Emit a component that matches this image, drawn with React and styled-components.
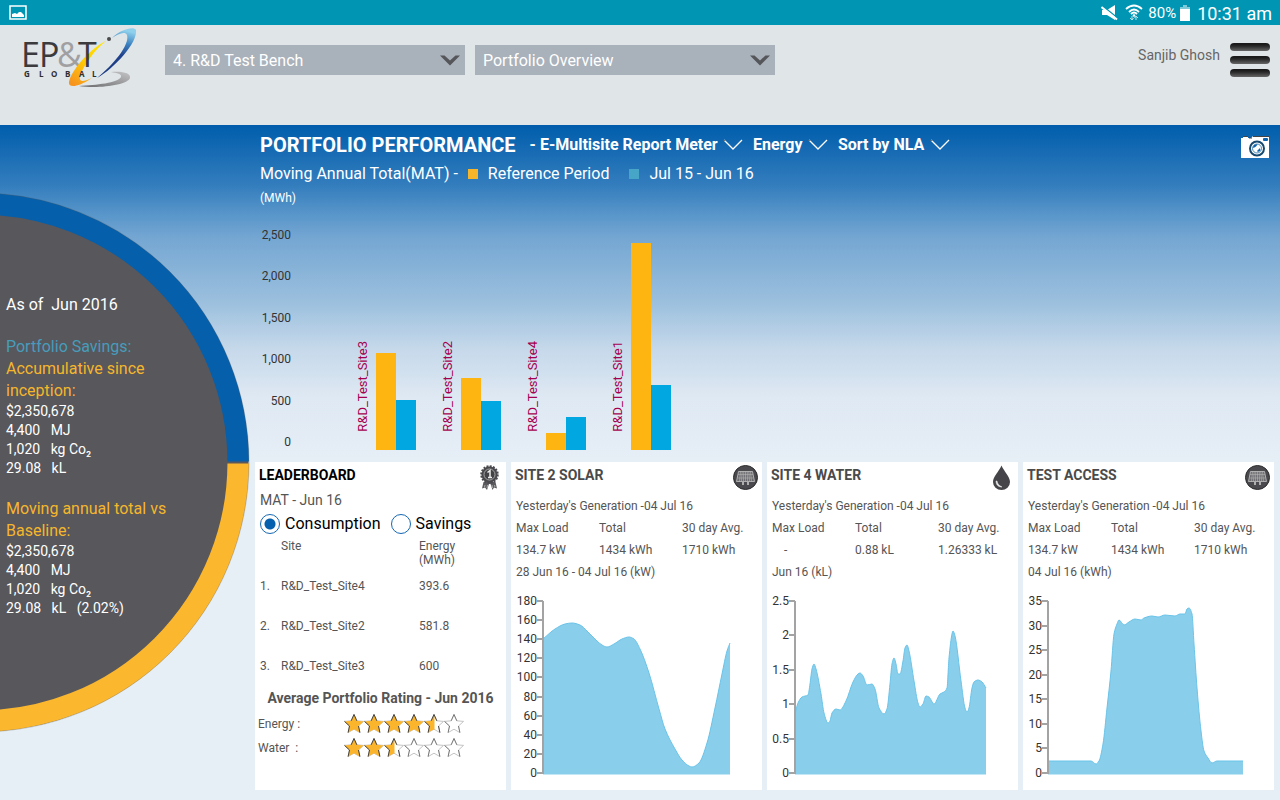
import React, { useState } from 'react';
import styled, { createGlobalStyle } from 'styled-components';

const sites = [
  { name: 'R&D_Test_Site3', reference: 97, current: 50 },
  { name: 'R&D_Test_Site2', reference: 72, current: 49 },
  { name: 'R&D_Test_Site4', reference: 17, current: 33 },
  { name: 'R&D_Test_Site1', reference: 207, current: 65 },
];

const leaders = [
  { site: 'R&D_Test_Site4', energy: '393.6' },
  { site: 'R&D_Test_Site2', energy: '581.8' },
  { site: 'R&D_Test_Site3', energy: '600' },
];

// [distance from the axis, height above zero]
const solarPoints = [
  [0, 134], [12, 144], [22, 149], [29, 150], [37, 148], [44, 142], [54, 132], [59, 128],
  [64, 126], [71, 129], [79, 134], [86, 136], [91, 134], [97, 124], [106, 100], [116, 64],
  [122, 44], [132, 24], [139, 13], [146, 7], [149, 6], [156, 10], [164, 30], [172, 65],
  [179, 99], [184, 122], [187, 130],
];

const waterPoints = [
  [0, 59], [3, 70], [7, 76], [13, 78], [15, 89], [17, 104], [19, 109], [21, 104], [26, 79],
  [29, 60], [33, 50], [35, 52], [37, 60], [41, 64], [45, 63], [51, 72], [58, 91], [63, 99],
  [65, 100], [68, 97], [72, 88], [77, 89], [80, 84], [84, 65], [89, 59], [92, 64], [95, 89],
  [97, 109], [99, 115], [101, 109], [103, 99], [105, 99], [108, 112], [110, 125], [112, 128],
  [114, 122], [119, 92], [123, 70], [125, 66], [128, 69], [131, 77], [134, 76], [139, 69],
  [145, 79], [149, 81], [152, 85], [154, 115], [157, 139], [158, 142], [160, 137], [166, 92],
  [170, 65], [172, 61], [174, 65], [177, 85], [179, 91], [183, 93], [187, 91], [191, 85],
];

const accessPoints = [
  [0, 12], [43, 12], [48, 9], [51, 12], [55, 29], [59, 65], [63, 102], [66, 139], [69, 149],
  [71, 153], [76, 148], [81, 151], [87, 154], [93, 153], [96, 155], [104, 157], [110, 156],
  [117, 158], [127, 157], [132, 159], [137, 159], [139, 164], [141, 165], [144, 159],
  [146, 129], [149, 85], [153, 42], [156, 22], [160, 15], [164, 10], [169, 12], [195, 12],
];

const widgets = [
  {
    title: 'SITE 2 SOLAR',
    icon: 'solar',
    stats: ['134.7 kW', '1434 kWh', '1710 kWh'],
    range: '28 Jun 16 - 04 Jul 16 (kW)',
    ticks: ['0', '20', '40', '60', '80', '100', '120', '140', '160', '180'],
    axis: 32,
    points: solarPoints,
  },
  {
    title: 'SITE 4 WATER',
    icon: 'water',
    stats: ['    -', '0.88 kL', '1.26333 kL'],
    range: 'Jun 16 (kL)',
    ticks: ['0', '0.5', '1', '1.5', '2', '2.5'],
    axis: 28,
    points: waterPoints,
  },
  {
    title: 'TEST ACCESS',
    icon: 'solar',
    stats: ['134.7 kW', '1434 kWh', '1710 kWh'],
    range: '04 Jul 16 (kWh)',
    ticks: ['0', '5', '10', '15', '20', '25', '30', '35'],
    axis: 25,
    points: accessPoints,
  },
];

// monotone curve through the points, so flat parts stay flat
function curve(points) {
  const slope = (a, b) => (b[1] - a[1]) / (b[0] - a[0]);
  const tangents = points.map((p, i) => {
    if (i === 0) return slope(p, points[1]);
    if (i === points.length - 1) return slope(points[i - 1], p);
    const before = slope(points[i - 1], p);
    const after = slope(p, points[i + 1]);
    return before * after <= 0 ? 0 : (2 * before * after) / (before + after);
  });
  return points
    .map((p, i) => {
      if (i === 0) return `M${p[0]} ${p[1]}`;
      const prev = points[i - 1];
      const third = (p[0] - prev[0]) / 3;
      return `C${prev[0] + third} ${prev[1] + tangents[i - 1] * third} ${p[0] - third} ${p[1] - tangents[i] * third} ${p[0]} ${p[1]}`;
    })
    .join('');
}

function AreaChart({ label, ticks, axis, points }) {
  const bottom = 178;
  const height = 172;
  const line = curve(points.map(([x, y]) => [axis + x, bottom - y]));
  const last = axis + points[points.length - 1][0];
  return (
    <ChartSvg viewBox="0 0 251 190" role="img" aria-label={label}>
      <path d={`${line}V${bottom + 1}H${axis}Z`} fill="#89cfec" />
      <path d={line} fill="none" stroke="#6bc3e8" />
      <path d={`M${axis} ${bottom + 1}H${last}`} stroke="#89cfec" />
      <path d={`M${axis} 6V${bottom + 1}`} stroke="#a3a3a3" strokeWidth="2" />
      {ticks.map((tick, i) => {
        const y = Math.round(bottom - (i * height) / (ticks.length - 1));
        return (
          <g key={tick}>
            <path d={`M${axis - 6} ${y}h6`} stroke="#a3a3a3" strokeWidth="2" />
            <text x={axis - 6} y={y + 4} textAnchor="end">{tick}</text>
          </g>
        );
      })}
    </ChartSvg>
  );
}

function Logo() {
  return (
    <LogoSvg viewBox="22 25 116 65" role="img" aria-label="EP&T Global">
      <defs>
        <linearGradient id="gold" x1="0.8" y1="0" x2="0.2" y2="1">
          <stop offset="0" stopColor="#ffe400" />
          <stop offset="0.5" stopColor="#ffcb05" />
          <stop offset="1" stopColor="#f7941e" />
        </linearGradient>
        <linearGradient id="blue" x1="0.5" y1="0" x2="0.3" y2="1">
          <stop offset="0" stopColor="#8fd0ec" />
          <stop offset="0.25" stopColor="#3c82c0" />
          <stop offset="0.5" stopColor="#20428c" />
          <stop offset="1" stopColor="#1b3a80" />
        </linearGradient>
        <linearGradient id="silver" x1="1" y1="0" x2="0" y2="1">
          <stop offset="0" stopColor="#c4c4c6" />
          <stop offset="1" stopColor="#6a6a6c" />
        </linearGradient>
      </defs>
      <LogoLetters>
        <tspan x="21" fill="#3b3a3c">E</tspan>
        <tspan x="39" fill="#3b3a3c">P</tspan>
        <tspan x="57" fill="#a0a0a2">&amp;</tspan>
      </LogoLetters>
      <path d="M106 41C92 47 71 70 69 82C68 88 77 88 92 78C83 82 79 82 80 77C82 68 94 50 106 41Z" fill="url(#gold)" />
      <LogoLetters>
        <tspan x="78" fill="#3b3a3c">T</tspan>
      </LogoLetters>
      <path d="M112 38C121 29 134 26 136 30C138 42 115 68 97 78C113 65 130 45 127 35C125 31 118 34 112 38Z" fill="url(#blue)" />
      <path d="M111 72C123 71 131 73 130 78C128 85 98 89 79 86C96 85 118 83 121 77C122 74 117 73 111 72Z" fill="url(#silver)" />
      <circle cx="109" cy="39" r="2" fill="#4b4b4d" />
      <LogoGlobal x="24 39 51 65 79 92" y="77">GLOBAL</LogoGlobal>
    </LogoSvg>
  );
}

function Chevron() {
  return (
    <svg width="20" height="12" viewBox="0 0 20 12" aria-hidden="true">
      <path d="M1 1L10 10L19 1" fill="none" stroke="#fff" strokeWidth="1.3" />
      <path d="M0 1L3 1L1 2Z" fill="#444" />
    </svg>
  );
}

function SolarIcon() {
  return (
    <svg width="25" height="25" viewBox="0 0 25 25" aria-hidden="true">
      <circle cx="12.5" cy="12.5" r="12" fill="#4a494d" stroke="#2b2a2d" />
      <path d="M5.5 6.5H19.5L21.5 16.5H3.5Z" fill="#6b6a6e" stroke="#c4c4c4" strokeWidth="0.8" />
      <path d="M5 9.5H20M4.5 13H20.5" stroke="#bbb" strokeWidth="0.5" />
      <path d="M7.5 6.5L6.5 16.5M9.2 6.5L8.5 16.5M10.8 6.5L10.5 16.5M12.5 6.5V16.5M14.2 6.5L14.5 16.5M15.8 6.5L16.5 16.5M17.5 6.5L18.5 16.5" stroke="#bbb" strokeWidth="0.6" />
      <path d="M10 17V20M15 17V20" stroke="#cfcfcf" strokeWidth="1.5" />
    </svg>
  );
}

function DropIcon() {
  return (
    <svg width="25" height="25" viewBox="0 0 25 25" aria-hidden="true">
      <path d="M12.5 0.5C15 6.5 21 11.5 21 17A8.5 8 0 0 1 4 17C4 11.5 10 6.5 12.5 0.5Z" fill="#454448" />
      <path d="M7 16C7 20 9.5 22 13 22C10 20.5 8.5 19 8 16Z" fill="#e8e8e8" stroke="#e8e8e8" strokeWidth="0.5" />
    </svg>
  );
}

function MedalIcon() {
  return (
    <svg width="25" height="25" viewBox="0 0 25 25" aria-hidden="true">
      <path d="M6.500 17L5 23.500L8 22.500L10 25L12 19L13.500 19L15.500 25L17 22.500L20 23.500L18.500 17Z" fill="#5a595d" />
      <path d="M8 20L7.500 22M10.500 20L10 23M15 20L15.500 23M17.500 20L18 22" stroke="#ddd" strokeWidth="0.6" />
      <circle cx="12.500" cy="9.500" r="8" fill="#4a494d" stroke="#4a494d" strokeWidth="2.500" strokeDasharray="1.900 1.240" />
      <circle cx="12.500" cy="9.500" r="5.500" fill="#434246" stroke="#bbb" strokeWidth="0.8" />
      <path d="M10.500 7.500L13 5.500V12.500M11 12.500H15" fill="none" stroke="#eee" strokeWidth="1.500" />
    </svg>
  );
}

const icons = { solar: SolarIcon, water: DropIcon };

const STAR = 'M10 0.5L12.8 6.8L19.5 7.4L14.5 12L15.9 18.6L10 15.2L4.1 18.6L5.5 12L0.5 7.4L7.2 6.8Z';

function Stars({ label, value }) {
  return (
    <svg width="120" height="20" viewBox="0 0 120 20" role="img" aria-label={`${label} ${value} of 6`}>
      <defs>
        <clipPath id="left-half">
          <rect width="10.500" height="20" />
        </clipPath>
      </defs>
      {[0, 1, 2, 3, 4, 5].map((i) => (
        <g key={i} transform={`translate(${i * 20} 0)`}>
          <path d={STAR} fill="#fff" stroke="#aaa" strokeWidth="0.7" />
          {value > i && (
            <path d={STAR} fill="#fbb52c" clipPath={value - i < 1 ? 'url(#left-half)' : undefined} />
          )}
          <path
            d="M0.5 7.4L5.500 12L4.100 18.600M10 0.500L7.200 6.800M10 0.500L12.800 6.800M14.500 12L15.900 18.600"
            fill="none"
            stroke="#333"
            strokeWidth="0.9"
            strokeOpacity={value > i ? 1 : 0.6}
          />
        </g>
      ))}
    </svg>
  );
}

function StatusBar() {
  return (
    <StatusWrapper>
      <svg width="18" height="15" viewBox="0 0 18 15" aria-hidden="true">
        <rect x="1" y="1" width="16" height="13" fill="none" stroke="#fff" strokeWidth="1.5" />
        <path d="M3 12V9L6 8L8 9L10 7L12 7L15 10V12Z" fill="#fff" />
      </svg>
      <StatusRight>
        <svg width="17" height="16" viewBox="0 0 17 16" aria-hidden="true">
          <path d="M1 5H6L14 0V15L6 10H1Z" fill="#fff" />
          <path d="M1 0.500L16 12.500" stroke="#0096b3" strokeWidth="1.500" />
          <path d="M0.500 2L16 14.500" stroke="#fff" strokeWidth="2" />
        </svg>
        <WifiIcon viewBox="0 0 18 17" aria-hidden="true">
          <path d="M1 5Q9 -2 17 5M4 8Q9 3 14 8M6 10Q9 7 12 10" fill="none" stroke="#fff" strokeWidth="1.800" />
          <circle cx="9" cy="11.500" r="1.300" fill="#fff" />
          <path d="M7 12V16M5 14L7 16L8.500 14M11 16V12M9.500 14L11 12L13 14" fill="none" stroke="#b8e0e9" />
        </WifiIcon>
        <Percent>80%</Percent>
        <BatteryIcon viewBox="0 0 10 16" aria-hidden="true">
          <path d="M3 0H7V2H10V5H0V2H3Z" fill="#7fcad9" />
          <rect y="4" width="10" height="12" fill="#fff" />
        </BatteryIcon>
        <Clock>10:31 am</Clock>
      </StatusRight>
    </StatusWrapper>
  );
}

function HeaderSelect({ label, value }) {
  return (
    <SelectBox>
      <select aria-label={label} defaultValue={value}>
        <option>{value}</option>
      </select>
      <svg width="20" height="11" viewBox="0 0 20 11" aria-hidden="true">
        <path d="M0 0.500H4.500L10 5.500L15.500 0.500H20L10 10.500Z" fill="#55565a" />
      </svg>
    </SelectBox>
  );
}

function Filter({ label, value }) {
  return (
    <FilterBox>
      <FilterSelect aria-label={label} defaultValue={value}>
        <option>{value}</option>
      </FilterSelect>
      <Chevron />
    </FilterBox>
  );
}

function Savings() {
  return (
    <Side>
      <Donut viewBox="0 0 250 540" aria-hidden="true">
        <circle cx="-20.500" cy="269.500" r="269" fill="#58575c" />
        <path d="M-20.500 10.800A258.700 258.700 0 0 1 238.200 268.500" fill="none" stroke="#055faa" strokeWidth="21.500" />
        <path d="M238.200 270.500A258.700 258.700 0 0 1 -20.500 528.200" fill="none" stroke="#fbb72e" strokeWidth="21.500" />
        <circle cx="-20.500" cy="269.500" r="269.500" fill="none" stroke="#55585c" strokeOpacity="0.4" strokeWidth="0.7" />
      </Donut>
      <SideText>
        <SideHeading>As of  Jun 2016</SideHeading>
        <div>
          <SideHeading $color="#479cbb">Portfolio Savings:</SideHeading>
          <SideHeading $color="#f5b62b">{'Accumulative since\ninception:'}</SideHeading>
          <Amount>$2,350,678</Amount>
          <Amount>{'4,400   MJ'}</Amount>
          <Amount>{'1,020   kg Co₂'}</Amount>
          <Amount>{'29.08   kL'}</Amount>
        </div>
        <div>
          <SideHeading $color="#f5b62b">{'Moving annual total vs\nBaseline:'}</SideHeading>
          <Amount>$2,350,678</Amount>
          <Amount>{'4,400   MJ'}</Amount>
          <Amount>{'1,020   kg Co₂'}</Amount>
          <Amount>{'29.08   kL   (2.02%)'}</Amount>
        </div>
      </SideText>
    </Side>
  );
}

function Performance() {
  return (
    <section>
      <TitleRow>
        <PageTitle>PORTFOLIO PERFORMANCE</PageTitle>
        <Filters>
          <Dash>-</Dash>
          <Filter label="Meter" value="E-Multisite Report Meter" />
          <Filter label="Utility" value="Energy" />
          <Filter label="Sort" value="Sort by NLA" />
        </Filters>
        <IconButton aria-label="Take a snapshot">
          <svg width="28" height="22" viewBox="0 0 28 22" aria-hidden="true">
            <path d="M0 2H2V0H7V2H10L12 0H28V22H0Z" fill="#fff" />
            <path d="M2 0.500H7M8 2H11M12 0.500H28" stroke="#444" fill="none" />
            <circle cx="16" cy="12.500" r="7" fill="#fff" stroke="#17496f" strokeWidth="2" />
            <circle cx="16" cy="12.500" r="4.500" fill="#fff" stroke="#1c69a5" strokeWidth="0.8" />
            <path d="M12 11Q13 7.500 16.500 8.500L15 10.500L12.500 12Z" fill="#0b63ae" />
            <path d="M16 15L19 12L19.500 14.500L17 16Z" fill="#0b63ae" />
            <rect x="22" y="2" width="5" height="3" rx="1" fill="#0b63ae" />
          </svg>
        </IconButton>
      </TitleRow>
      <Legend>
        <span>Moving Annual Total(MAT) -</span>
        <Swatch $color="#f7b52c" />
        <Period>Reference Period</Period>
        <Swatch $color="#47a5c7" />
        <span>Jul 15 - Jun 16</span>
      </Legend>
      <Unit>(MWh)</Unit>
      <BarChart>
        <Scale>
          {['2,500', '2,000', '1,500', '1,000', '500', '0'].map((n) => (
            <span key={n}>{n}</span>
          ))}
        </Scale>
        <Groups>
          {sites.map((site) => (
            <Group key={site.name}>
              <SiteName>{site.name}</SiteName>
              <Bar $color="#ffb511" $height={site.reference} />
              <Bar $color="#00a7e1" $height={site.current} />
            </Group>
          ))}
        </Groups>
      </BarChart>
    </section>
  );
}

function Leaderboard() {
  const [mode, setMode] = useState('Consumption');
  return (
    <Card>
      <CardHeader>
        <CardTitle $color="#000">LEADERBOARD</CardTitle>
        <MedalIcon />
      </CardHeader>
      <Month>MAT - Jun 16</Month>
      <Radios>
        {['Consumption', 'Savings'].map((name) => (
          <RadioLabel key={name}>
            <Radio type="radio" name="mode" checked={mode === name} onChange={() => setMode(name)} />
            {name}
          </RadioLabel>
        ))}
      </Radios>
      <LeaderTable>
        <thead>
          <tr>
            <RankHead aria-label="Rank" />
            <SiteHead>Site</SiteHead>
            <th>Energy<br />(MWh)</th>
          </tr>
        </thead>
        <tbody>
          {leaders.map((row, i) => (
            <tr key={row.site}>
              <td>{i + 1}.</td>
              <td>{row.site}</td>
              <td>{row.energy}</td>
            </tr>
          ))}
        </tbody>
      </LeaderTable>
      <RatingTitle>Average Portfolio Rating - Jun 2016</RatingTitle>
      <Rating>
        <span>Energy :</span>
        <Stars label="Energy" value={4.5} />
      </Rating>
      <Rating>
        <span>{'Water  :'}</span>
        <Stars label="Water" value={2.5} />
      </Rating>
    </Card>
  );
}

function Widget({ widget }) {
  const Icon = icons[widget.icon];
  return (
    <Card>
      <CardHeader>
        <CardTitle>{widget.title}</CardTitle>
        <Icon />
      </CardHeader>
      <Stats>
        <p>Yesterday's Generation -04 Jul 16</p>
        <table>
          <thead>
            <tr>
              <th>Max Load</th>
              <th>Total</th>
              <th>30 day Avg.</th>
            </tr>
          </thead>
          <tbody>
            <tr>
              {widget.stats.map((stat) => (
                <td key={stat}>{stat}</td>
              ))}
            </tr>
          </tbody>
        </table>
        <p>{widget.range}</p>
      </Stats>
      <AreaChart label={widget.title} ticks={widget.ticks} axis={widget.axis} points={widget.points} />
    </Card>
  );
}

function App() {
  return (
    <>
      <GlobalStyle />
      <StatusBar />
      <Header>
        <Logo />
        <HeaderSelect label="Portfolio" value="4. R&D Test Bench" />
        <HeaderSelect label="View" value="Portfolio Overview" />
        <UserName>Sanjib Ghosh</UserName>
        <MenuButton aria-label="Menu">
          <span />
          <span />
          <span />
        </MenuButton>
      </Header>
      <Main>
        <Savings />
        <Content>
          <Performance />
          <Cards>
            <Leaderboard />
            {widgets.map((widget) => (
              <Widget key={widget.title} widget={widget} />
            ))}
          </Cards>
        </Content>
      </Main>
    </>
  );
}

const GlobalStyle = createGlobalStyle`
  * {
    box-sizing: border-box;
  }
  body {
    margin: 0;
    background: #e6eef6;
    font-family: Roboto, sans-serif;
    font-size: 12px;
    color: #555;
  }
  h1, h2, h3, p {
    margin: 0;
  }
  button, select, input {
    font: inherit;
    margin: 0;
  }
  svg {
    display: block;
    flex-shrink: 0;
  }
`;

const StatusWrapper = styled.div`
  display: flex;
  justify-content: space-between;
  align-items: center;
  height: 25px;
  padding: 0 8px 0 9px;
  background: #0096b3;
  color: #fff;
`;

const StatusRight = styled.div`
  display: flex;
  align-items: center;
`;

const WifiIcon = styled.svg`
  width: 18px;
  height: 17px;
  margin: 0 5px 0 7px;
`;

const Percent = styled.span`
  font-size: 15px;
`;

const BatteryIcon = styled.svg`
  width: 10px;
  height: 16px;
  margin: 0 7px 0 4px;
`;

const Clock = styled.span`
  font-size: 18px;
  line-height: 24px;
  padding-top: 2px;
`;

const Header = styled.header`
  display: flex;
  gap: 10px;
  height: 100px;
  padding: 0 10px 0 22px;
  background: #e0e5e8;
`;

const LogoSvg = styled.svg`
  width: 116px;
  height: 65px;
  margin-right: 17px;
`;

const LogoLetters = styled.text.attrs({ y: 67 })`
  font-family: 'Open Sans', sans-serif;
  font-size: 34px;
`;

const LogoGlobal = styled.text`
  font-family: 'Open Sans', sans-serif;
  font-size: 8px;
  font-weight: 700;
  fill: #2f2e30;
`;

const SelectBox = styled.div`
  display: flex;
  align-items: center;
  flex: 0 1 300px;
  height: 30px;
  margin-top: 20px;
  padding-right: 5px;
  background: #a9b1bb;

  select {
    flex: 1;
    height: 30px;
    min-width: 0;
    padding: 0 0 0 8px;
    border: 0;
    appearance: none;
    background: none;
    color: #fff;
    font-size: 16px;
  }
`;

const UserName = styled.span`
  margin-left: auto;
  padding-top: 20px;
  font-size: 14px;
  line-height: 20px;
  color: #666;
`;

const MenuButton = styled.button`
  display: flex;
  flex-direction: column;
  gap: 5px;
  width: 40px;
  height: 36px;
  margin-top: 18px;
  padding: 0;
  border: 0;
  background: none;

  span {
    width: 40px;
    height: 8px;
    border-radius: 4px;
    background: linear-gradient(#1a1a1a 15%, #2a2a2a 40%, #666);
  }
`;

const Main = styled.main`
  display: flex;
  min-height: 675px;
  background: linear-gradient(
    #005dac 0,
    #0d65b0 15px,
    #337dbd 60px,
    #5996ca 90px,
    #74a6d2 112px,
    #9cc0de 178px,
    #c5d8ea 223px,
    #dfe9f3 273px,
    #e6eef6 335px
  );
`;

const Side = styled.aside`
  position: relative;
  flex: 0 0 250px;
`;

const Donut = styled.svg`
  position: absolute;
  top: 68px;
  left: 0;
  width: 250px;
  height: 540px;
`;

const SideText = styled.div`
  position: relative;
  display: flex;
  flex-direction: column;
  gap: 20px;
  padding: 169px 0 0 6px;
  white-space: pre;
`;

const SideHeading = styled.h3`
  font-size: 16px;
  line-height: 22px;
  font-weight: 400;
  color: ${(props) => props.$color || '#fff'};
`;

const Amount = styled.p`
  font-size: 14px;
  line-height: 19px;
  color: #fff;
`;

const Content = styled.div`
  flex: 1;
  min-width: 0;
  padding: 0 6px 10px 5px;
`;

const TitleRow = styled.div`
  display: flex;
  align-items: center;
  height: 39px;
  padding: 0 5px;
  color: #fff;
`;

const PageTitle = styled.h1`
  font-size: 20px;
  line-height: 24px;
  font-weight: 700;
  margin-right: 14px;
`;

const Filters = styled.div`
  display: flex;
  align-items: center;
  gap: 10px;
  font-size: 16px;
  font-weight: 700;
`;

const Dash = styled.span`
  margin-right: -6px;
`;

const FilterBox = styled.div`
  display: flex;
  align-items: center;
  gap: 5px;
`;

const FilterSelect = styled.select`
  padding: 0;
  border: 0;
  appearance: none;
  background: none;
  color: #fff;
`;

const IconButton = styled.button`
  margin-left: auto;
  padding: 4px 0 0;
  border: 0;
  background: none;
`;

const Legend = styled.div`
  display: flex;
  align-items: center;
  gap: 10px;
  padding: 0 5px;
  font-size: 16px;
  line-height: 20px;
  color: #fff;
`;

const Swatch = styled.i`
  width: 10px;
  height: 10px;
  background: ${(props) => props.$color};
`;

const Period = styled.span`
  margin-right: 10px;
`;

const Unit = styled.p`
  padding: 4px 5px 0;
  line-height: 20px;
  color: #fff;
`;

const BarChart = styled.div`
  display: flex;
  height: 222px;
  margin: 20px 0 12px;
`;

const Scale = styled.div`
  display: flex;
  flex-direction: column;
  justify-content: space-between;
  width: 36px;
  height: 221px;
  line-height: 14px;
  text-align: right;
  color: #333;
`;

const Groups = styled.div`
  display: flex;
  gap: 22px;
  padding-left: 62px;
`;

const Group = styled.div`
  display: flex;
  align-items: flex-end;
`;

const SiteName = styled.span`
  width: 20px;
  margin: 0 3px 18px 0;
  writing-mode: vertical-rl;
  transform: rotate(180deg);
  font-size: 13px;
  line-height: 20px;
  color: #a5004f;
`;

const Bar = styled.div`
  width: 20px;
  height: ${(props) => props.$height}px;
  background: ${(props) => props.$color};
`;

const Cards = styled.div`
  display: grid;
  grid-template-columns: repeat(4, minmax(0, 1fr));
  gap: 5px;
`;

const Card = styled.section`
  min-height: 328px;
  background: #fff;
`;

const CardHeader = styled.div`
  display: flex;
  justify-content: space-between;
  padding: 3px 4px 0;
`;

const CardTitle = styled.h2`
  font-size: 14px;
  line-height: 20px;
  font-weight: 700;
  color: ${(props) => props.$color || '#4a4a4a'};
`;

const Month = styled.p`
  padding-left: 5px;
  font-size: 14px;
  line-height: 20px;
`;

const Radios = styled.div`
  display: flex;
  gap: 10px;
  padding: 4px 5px 0;
`;

const RadioLabel = styled.label`
  display: flex;
  align-items: center;
  gap: 5px;
  font-size: 16px;
  line-height: 20px;
  color: #000;
`;

const Radio = styled.input`
  appearance: none;
  width: 20px;
  height: 20px;
  border: 1px solid #1468b3;
  border-radius: 50%;
  background: #fff;

  &:checked {
    background: radial-gradient(circle, #0560ad 5px, #fff 6px);
  }
`;

const LeaderTable = styled.table`
  width: 100%;
  margin-top: 5px;
  border-collapse: collapse;
  table-layout: fixed;

  th {
    padding: 0;
    line-height: 14px;
    font-weight: 400;
    text-align: left;
    vertical-align: top;
  }

  td {
    height: 40px;
    padding: 0 0 2px;
  }

  td:first-child {
    padding-left: 5px;
  }
`;

const RankHead = styled.th`
  width: 26px;
`;

const SiteHead = styled.th`
  width: 138px;
`;

const RatingTitle = styled.h3`
  font-size: 14px;
  line-height: 22px;
  padding-bottom: 3px;
  font-weight: 700;
  text-align: center;
`;

const Rating = styled.div`
  display: flex;
  align-items: center;
  height: 24px;
  padding-left: 3px;
  white-space: pre;

  span {
    width: 86px;
  }
`;

const Stats = styled.div`
  padding: 5px 0 0 5px;
  line-height: 22px;

  table {
    border-collapse: collapse;
    table-layout: fixed;
    width: 246px;
  }

  th, td {
    width: 83px;
    padding: 0;
    font-weight: 400;
    text-align: left;
    white-space: pre;
  }
`;

const ChartSvg = styled.svg`
  width: 100%;
  height: 190px;
  margin-top: 12px;

  text {
    font-size: 12px;
    fill: #333;
  }
`;

export default App;
